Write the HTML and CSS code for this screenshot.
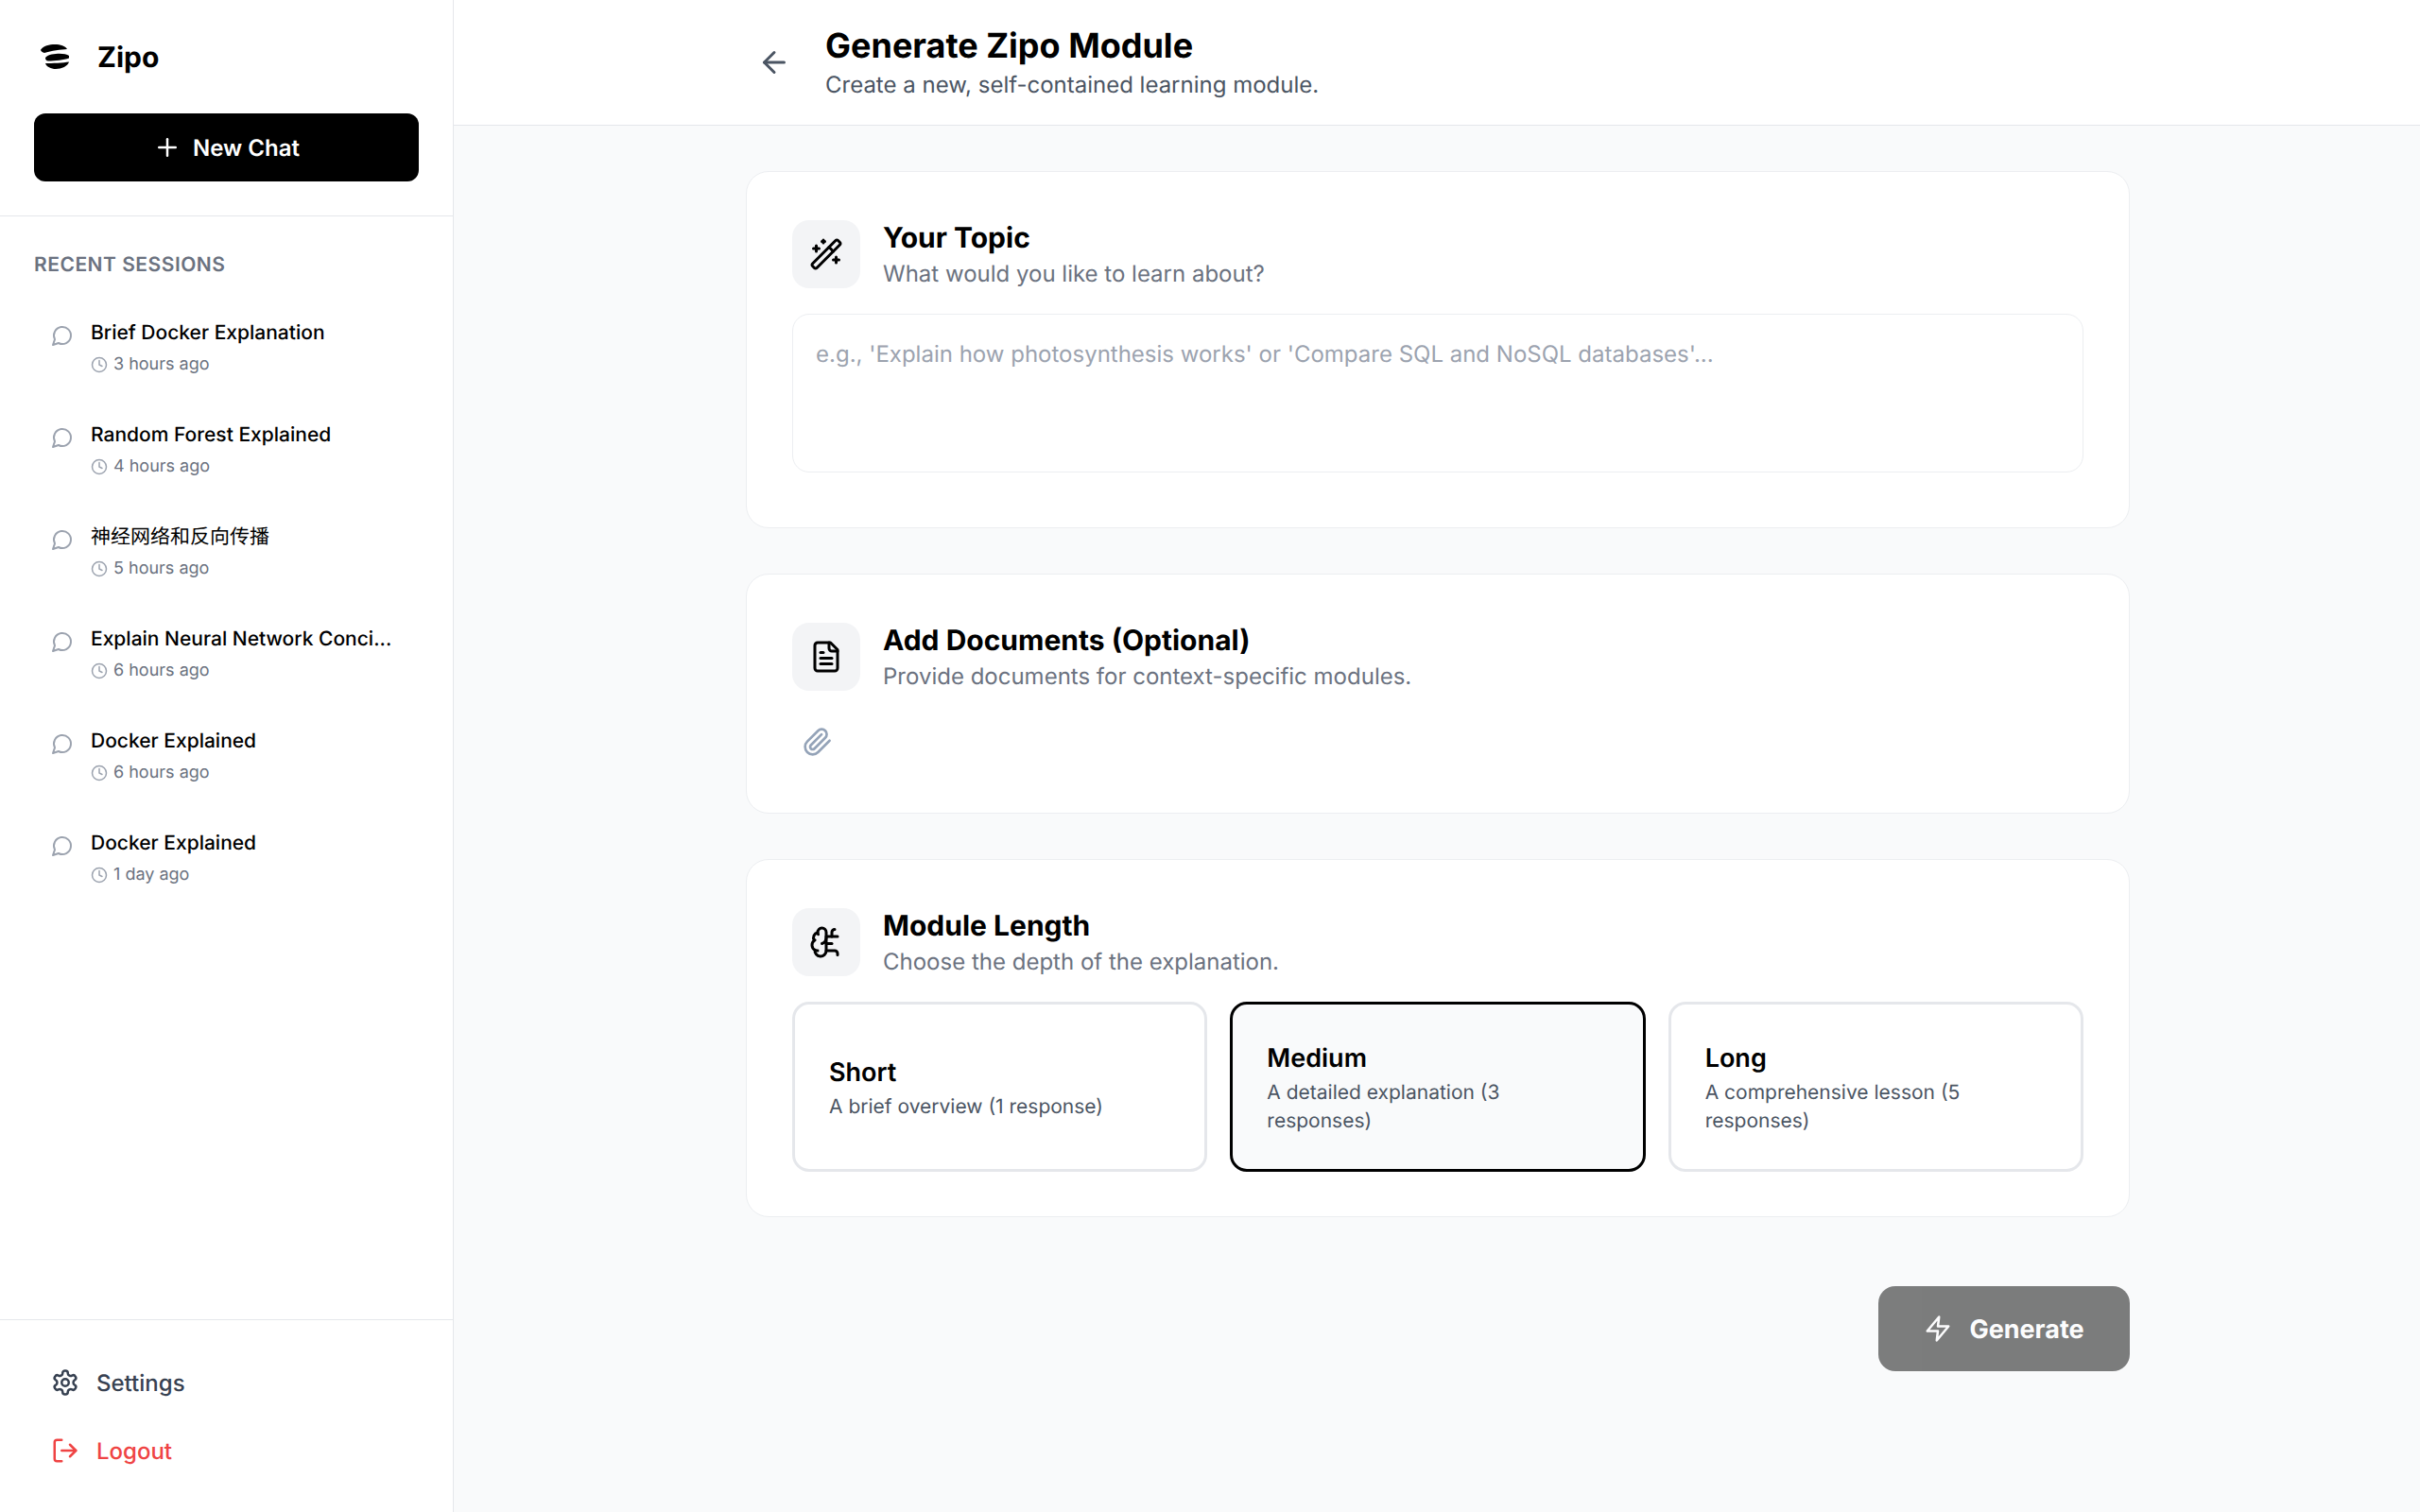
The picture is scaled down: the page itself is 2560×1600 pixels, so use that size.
FILE: index.html
```html
<!doctype html>
<html lang="en">
<head>
	<meta charset="UTF-8" />
	<title>Generate Zipo Module</title>
	<link rel="stylesheet" href="styles.css">
</head>
<body>
<div class="app">
	<aside class="sidebar">
		<div class="side_top">
			<div class="brand">
				<svg class="logo" viewBox="0 0 34 26"><path d="M0 5.700C3 1.500 9 0 15 0C21 0 26 1.500 28 5C22 5.500 11 6.500 4 9C2 8.500 0 7 0 5.700Z"/><path d="M5 14C8 10.500 15 9.800 20 9.800C24 9.800 28 10.500 30 12L30 14.500C25 16.500 15 17.500 8 17.500C6 17.500 5 16 5 14Z"/><path d="M5 20C12 20 24 19.500 30 18.500C29 23 22 26 16 26C11 26 6 23.500 5 20Z"/></svg>
				<span>Zipo</span>
			</div>
			<button class="new_chat">
				<svg class="icon" viewBox="0 0 24 24"><path d="M5 12h14"/><path d="M12 5v14"/></svg>
				New Chat
			</button>
		</div>
		<div class="sessions">
			<h2>RECENT SESSIONS</h2>
			<ul>
				<li>
					<svg class="icon msg" viewBox="0 0 24 24"><path d="M7.900 20A9 9 0 1 0 4 16.100L2 22Z"/></svg>
					<div><p class="s_title">Brief Docker Explanation</p>
					<p class="s_time"><svg class="icon" viewBox="0 0 24 24"><circle cx="12" cy="12" r="10"/><path d="M12 6v6l4 2"/></svg>3 hours ago</p></div>
				</li>
				<li>
					<svg class="icon msg" viewBox="0 0 24 24"><path d="M7.900 20A9 9 0 1 0 4 16.100L2 22Z"/></svg>
					<div><p class="s_title">Random Forest Explained</p>
					<p class="s_time"><svg class="icon" viewBox="0 0 24 24"><circle cx="12" cy="12" r="10"/><path d="M12 6v6l4 2"/></svg>4 hours ago</p></div>
				</li>
				<li>
					<svg class="icon msg" viewBox="0 0 24 24"><path d="M7.900 20A9 9 0 1 0 4 16.100L2 22Z"/></svg>
					<div><p class="s_title cjk">神经网络和反向传播</p>
					<p class="s_time"><svg class="icon" viewBox="0 0 24 24"><circle cx="12" cy="12" r="10"/><path d="M12 6v6l4 2"/></svg>5 hours ago</p></div>
				</li>
				<li>
					<svg class="icon msg" viewBox="0 0 24 24"><path d="M7.900 20A9 9 0 1 0 4 16.100L2 22Z"/></svg>
					<div><p class="s_title">Explain Neural Network Conci...</p>
					<p class="s_time"><svg class="icon" viewBox="0 0 24 24"><circle cx="12" cy="12" r="10"/><path d="M12 6v6l4 2"/></svg>6 hours ago</p></div>
				</li>
				<li>
					<svg class="icon msg" viewBox="0 0 24 24"><path d="M7.900 20A9 9 0 1 0 4 16.100L2 22Z"/></svg>
					<div><p class="s_title">Docker Explained</p>
					<p class="s_time"><svg class="icon" viewBox="0 0 24 24"><circle cx="12" cy="12" r="10"/><path d="M12 6v6l4 2"/></svg>6 hours ago</p></div>
				</li>
				<li>
					<svg class="icon msg" viewBox="0 0 24 24"><path d="M7.900 20A9 9 0 1 0 4 16.100L2 22Z"/></svg>
					<div><p class="s_title">Docker Explained</p>
					<p class="s_time"><svg class="icon" viewBox="0 0 24 24"><circle cx="12" cy="12" r="10"/><path d="M12 6v6l4 2"/></svg>1 day ago</p></div>
				</li>
			</ul>
		</div>
		<div class="side_bottom">
			<a class="side_link">
				<svg class="icon" viewBox="0 0 24 24"><path d="M12.220 2h-.44a2 2 0 0 0-2 2v.18a2 2 0 0 1-1 1.730l-.43.25a2 2 0 0 1-2 0l-.15-.08a2 2 0 0 0-2.730.73l-.22.38a2 2 0 0 0 .73 2.730l.15.1a2 2 0 0 1 1 1.720v.51a2 2 0 0 1-1 1.740l-.15.09a2 2 0 0 0-.73 2.730l.22.38a2 2 0 0 0 2.730.73l.15-.08a2 2 0 0 1 2 0l.43.25a2 2 0 0 1 1 1.730V20a2 2 0 0 0 2 2h.44a2 2 0 0 0 2-2v-.18a2 2 0 0 1 1-1.730l.43-.25a2 2 0 0 1 2 0l.15.08a2 2 0 0 0 2.730-.73l.22-.39a2 2 0 0 0-.73-2.730l-.15-.08a2 2 0 0 1-1-1.740v-.5a2 2 0 0 1 1-1.740l.15-.09a2 2 0 0 0 .73-2.730l-.22-.38a2 2 0 0 0-2.730-.73l-.15.08a2 2 0 0 1-2 0l-.43-.25a2 2 0 0 1-1-1.730V4a2 2 0 0 0-2-2z"/><circle cx="12" cy="12" r="3"/></svg>
				Settings
			</a>
			<a class="side_link logout">
				<svg class="icon" viewBox="0 0 24 24"><path d="M9 21H5a2 2 0 0 1-2-2V5a2 2 0 0 1 2-2h4"/><path d="m16 17 5-5-5-5"/><path d="M21 12H9"/></svg>
				Logout
			</a>
		</div>
	</aside>
	<main class="main">
		<header class="top">
			<div class="wrap top_in">
				<svg class="icon back" viewBox="0 0 24 24"><path d="m12 19-7-7 7-7"/><path d="M19 12H5"/></svg>
				<div>
					<h1>Generate Zipo Module</h1>
					<p>Create a new, self-contained learning module.</p>
				</div>
			</div>
		</header>
		<div class="wrap content">
			<section class="card topic">
				<div class="card_head">
					<div class="tile"><svg class="icon" viewBox="0 0 24 24"><path d="m21.640 3.640-1.280-1.280a1.210 1.210 0 0 0-1.720 0L2.360 18.640a1.210 1.210 0 0 0 0 1.720l1.280 1.280a1.200 1.200 0 0 0 1.720 0L21.640 5.360a1.200 1.200 0 0 0 0-1.720"/><path d="m14 7 3 3"/><path d="M5 6v4"/><path d="M19 14v4"/><path d="M10 2v2"/><path d="M7 8H3"/><path d="M21 16h-4"/><path d="M11 3H9"/></svg></div>
					<div><h3>Your Topic</h3><p>What would you like to learn about?</p></div>
				</div>
				<div class="topic_input">e.g., 'Explain how photosynthesis works' or 'Compare SQL and NoSQL databases'...</div>
			</section>
			<section class="card docs">
				<div class="card_head">
					<div class="tile"><svg class="icon" viewBox="0 0 24 24"><path d="M15 2H6a2 2 0 0 0-2 2v16a2 2 0 0 0 2 2h12a2 2 0 0 0 2-2V7Z"/><path d="M14 2v4a2 2 0 0 0 2 2h4"/><path d="M10 9H8"/><path d="M16 13H8"/><path d="M16 17H8"/></svg></div>
					<div><h3>Add Documents (Optional)</h3><p>Provide documents for context-specific modules.</p></div>
				</div>
				<svg class="icon clip" viewBox="0 0 24 24"><path d="m21.440 11.050-9.190 9.190a6 6 0 0 1-8.490-8.490l8.570-8.570A4 4 0 1 1 18 8.840l-8.590 8.570a2 2 0 0 1-2.830-2.830l8.490-8.480"/></svg>
			</section>
			<section class="card length">
				<div class="card_head">
					<div class="tile"><svg class="icon" viewBox="0 0 24 24"><path d="M12 5a3 3 0 1 0-5.997.125 4 4 0 0 0-2.526 5.770 4 4 0 0 0 .556 6.588A4 4 0 1 0 12 18Z"/><path d="M9 13a4.500 4.500 0 0 0 3-4"/><path d="M6.003 5.125A3 3 0 0 0 6.401 6.500"/><path d="M3.477 10.896a4 4 0 0 1 .585-.396"/><path d="M6 18a4 4 0 0 1-1.967-.516"/><path d="M12 13h4"/><path d="M12 18h6a2 2 0 0 1 2 2v1"/><path d="M12 8h8"/><path d="M16 8V5a2 2 0 0 1 2-2"/></svg></div>
					<div><h3>Module Length</h3><p>Choose the depth of the explanation.</p></div>
				</div>
				<div class="options">
					<div class="option"><h4>Short</h4><p>A brief overview (1 response)</p></div>
					<div class="option on"><h4>Medium</h4><p>A detailed explanation (3 responses)</p></div>
					<div class="option"><h4>Long</h4><p>A comprehensive lesson (5 responses)</p></div>
				</div>
			</section>
			<div class="actions">
				<button class="generate">
					<svg class="icon" viewBox="0 0 24 24"><path d="M13 2 3 14h9l-1 8 10-12h-9l1-8z"/></svg>
					Generate
				</button>
			</div>
		</div>
	</main>
</div>
</body>
</html>
```

FILE: styles.css
```css
* {box-sizing:border-box;}
html, body {margin:0; padding:0;}
body {font-family:Inter, "Noto Sans CJK SC", sans-serif; background:#f9fafb; color:#000; text-rendering:geometricPrecision;}
h1, h2, h3, h4, p, ul {margin:0; padding:0;}
ul {list-style:none;}
.icon {fill:none; stroke:currentColor; stroke-width:2; stroke-linecap:round; stroke-linejoin:round; flex:none; display:block;}

.app {display:flex; height:1600px; overflow:hidden;}

.sidebar {width:480px; flex:none; background:#fff; border-right:1px solid #e5e7eb; display:flex; flex-direction:column;}
.side_top {padding:36px 36px 36px; height:229px; border-bottom:1px solid #e5e7eb;}
.brand {display:flex; align-items:center; gap:26px; height:48px; padding-left:7px; font-size:30px; font-weight:700;}
.brand span {padding-top:2px;}
.logo {width:34px; height:26px; fill:#000;}
.new_chat {margin-top:36px; width:407px; height:72px; background:#000; color:#fff; border:0; border-radius:12px; display:flex; align-items:center; justify-content:center; gap:12px; font:600 24px Inter, sans-serif; text-rendering:geometricPrecision;}
.new_chat .icon {width:30px; height:30px;}

.sessions {flex:1; padding:36px 36px 0;}
.sessions h2 {font-size:21px; line-height:32px; font-weight:600; color:#6b7280; letter-spacing:0.5px;}
.sessions ul {margin-top:23px;}
.sessions li {height:108px; display:flex; gap:20px; padding:18px 0 0 18px;}
.msg {width:24px; height:24px; color:#9ca3af; margin-top:5px;}
.s_title {font-size:21px; line-height:30px; font-weight:500; color:#000;}
.s_title.cjk {font-weight:400;}
.s_time {display:flex; align-items:center; gap:6px; font-size:18px; line-height:30px; margin-top:3px; color:#6b7280;}
.s_time .icon {width:18px; height:18px; color:#9ca3af;}
.sessions li > div {margin-left:-2px;}

.side_bottom {height:204px; border-top:1px solid #e5e7eb; padding:30px 36px 0;}
.side_link {height:72px; display:flex; align-items:center; gap:18px; padding-left:18px; font-size:24px; font-weight:500; color:#374151;}
.side_link .icon {width:30px; height:30px;}
.logout {color:#ef4444;}

.main {flex:1; min-width:0;}
.wrap {width:1464px; margin-left:309px;}
.top {height:133px; background:#fff; border-bottom:1px solid #e5e7eb;}
.top_in {display:flex; align-items:center; height:132px; padding-left:12px; gap:36px;}
.back {width:36px; height:36px; color:#4b5563;}
.top h1 {font-size:36px; line-height:48px; font-weight:700;}
.top p {font-size:24px; line-height:36px; color:#4b5563;}

.content {padding-top:48px;}
.card {background:#fff; border:1px solid #eceef1; border-radius:24px; padding:48px 48px 0; margin-bottom:48px;}
.topic {height:378px;}
.docs {height:254px;}
.length {height:379px;}
.card_head {display:flex; align-items:center; gap:24px; height:78px;}
.tile {width:72px; height:72px; background:#f3f4f6; border-radius:18px; display:flex; align-items:center; justify-content:center;}
.tile .icon {width:36px; height:36px;}
.card_head h3 {font-size:30px; line-height:44px; font-weight:700;}
.card_head p {font-size:24px; line-height:36px; margin-top:-2px; color:#6b7280;}

.topic_input {margin-top:24px; height:168px; border:1px solid #eceef1; border-radius:18px; padding:24px 24px; font-size:24px; line-height:36px; color:#9ca3af;}
.clip {width:32px; height:32px; color:#94a3b8; margin:35px 0 0 11px;}

.options {display:grid; grid-template-columns:repeat(3, 1fr); gap:24px; margin-top:24px;}
.option {height:180px; border:3px solid #e5e7eb; border-radius:18px; padding:2px 36px 0; display:flex; flex-direction:column; justify-content:center;}
.option.on {border-color:#000; background:#f9fafb;}
.option h4 {font-size:27px; line-height:40px; font-weight:600; margin-bottom:2px;}
.option p {font-size:21px; line-height:30px; color:#4b5563;}

.actions {display:flex; justify-content:flex-end; margin-top:73px;}
.generate {width:266px; height:90px; background:#000; opacity:.5; color:#fff; border:0; border-radius:18px; display:flex; align-items:center; justify-content:center; gap:18px; font:700 27px Inter, sans-serif; text-rendering:geometricPrecision;}
.generate .icon {width:30px; height:30px;}
```
